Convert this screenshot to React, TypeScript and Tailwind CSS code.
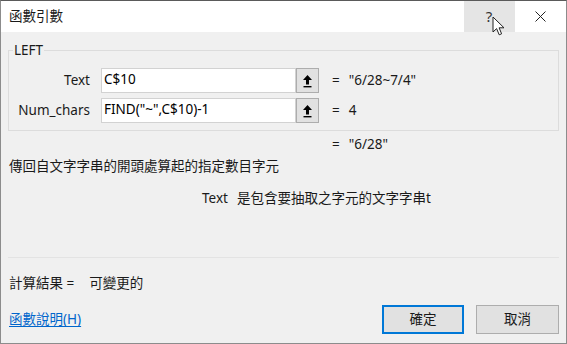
import React from 'react';

const FONT = { fontFamily: '"Noto Sans", "Noto Sans CJK TC", sans-serif' };

function RefButton() {
  return (
    <div className="w-[23px] h-[25px] shrink-0 border border-[#adadad] bg-[#e1e1e1] flex items-center justify-center">
      <svg width="11" height="14" viewBox="0 0 11 14">
        <path d="M5.5 1 L10 6 L7 6 L7 10.5 L4 10.5 L4 6 L1 6 Z" fill="#000" />
        <rect x="1.5" y="12" width="8" height="1.4" fill="#000" />
      </svg>
    </div>
  );
}

function ArgRow({ label, value, result }: { label: string; value: string; result: string }) {
  return (
    <div className="flex items-center h-[25px]">
      <div className="w-[82px] pr-[1px] text-right text-[13.5px] text-[#1a1a1a]">{label}</div>
      <div className="ml-[10px] w-[195px] h-[25px] bg-white border border-[#d2d2d2] px-[2px] text-[13.5px] leading-[20px] text-black">
        {value}
      </div>
      <RefButton />
      <div className="ml-[13px] text-[13.5px] text-[#1a1a1a]">=</div>
      <div className="ml-[9px] text-[13.5px] text-[#1a1a1a]">{result}</div>
    </div>
  );
}

export default function App() {
  return (
    <div
      className="w-[567px] h-[344px] bg-[#f0f0f0] border-x border-b border-t border-x-[#8c8c8c] border-b-[#8c8c8c] border-t-[#5a5a5a] flex flex-col text-[#1a1a1a] select-none"
      style={FONT}
    >
      {/* title bar */}
      <div className="h-[31px] bg-white flex items-stretch">
        <div className="flex-1 pl-[8px] flex items-center text-[13.5px] text-[#1a1a1a]">函數引數</div>
        <div className="relative w-[51px] bg-[#e5e5e5] flex items-center justify-center text-[15px] text-[#333]">
          <span className="-ml-[1px]">?</span>
          <svg className="absolute left-[28px] top-[15px]" width="14" height="21" viewBox="0 0 14 21">
            <path d="M1 1 L1 16 L4.6 12.6 L7.2 18.8 L9.6 17.8 L7.1 11.8 L12 11.8 Z" fill="#fff" stroke="#222" strokeWidth="1" strokeLinejoin="miter" />
          </svg>
        </div>
        <div className="w-[51px] flex items-center justify-center">
          <svg width="11" height="11" viewBox="0 0 11 11">
            <path d="M0.5 0.5 L10.5 10.5 M10.5 0.5 L0.5 10.5" stroke="#222" strokeWidth="1" />
          </svg>
        </div>
      </div>

      <div className="px-[7px] flex flex-col">
        {/* argument group */}
        <fieldset className="mt-[10px] h-[89px] border border-[#dcdcdc] px-0 pb-0">
          <legend className="ml-[4px] px-[1px] text-[13.5px] leading-[16px] text-[#1a1a1a]">LEFT</legend>
          <div className="mt-[10px] flex flex-col gap-[5px]">
            <ArgRow label="Text" value="C$10" result={'"6/28~7/4"'} />
            <ArgRow label="Num_chars" value={'FIND("~",C$10)-1'} result="4" />
          </div>
        </fieldset>

        <div className="h-[26px] flex items-center pl-[324px] text-[13.5px]">
          <span>=</span>
          <span className="ml-[9px]">"6/28"</span>
        </div>
        <div className="h-[18px] flex items-center pl-[1px] text-[13.5px]">傳回自文字字串的開頭處算起的指定數目字元</div>
        <div className="mt-[14px] h-[18px] flex items-center pl-[194px] text-[13.5px]">
          <span>Text</span>
          <span className="ml-[9px]">是包含要抽取之字元的文字字串t</span>
        </div>

        <div className="mt-[50px] h-px bg-[#e3e3e3]" />

        <div className="mt-[16px] h-[18px] flex items-center pl-[1px] text-[13.5px]">
          <span>計算結果 =</span>
          <span className="ml-[15px]">可變更的</span>
        </div>

        <div className="mt-[13px] flex items-center">
          <a className="pl-[1px] text-[13.5px] text-[#0066cc] underline underline-offset-2 flex-1">函數說明(H)</a>
          <button className="w-[82px] h-[29px] bg-[#e1e1e1] border-2 border-[#0078d7] text-[13.5px] text-[#1a1a1a]">確定</button>
          <button className="ml-[12px] w-[83px] h-[29px] bg-[#e1e1e1] border border-[#adadad] text-[13.5px] text-[#1a1a1a]">取消</button>
        </div>
      </div>
    </div>
  );
}
